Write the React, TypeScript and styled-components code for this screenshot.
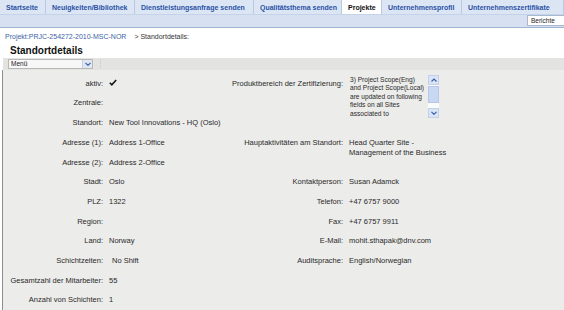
import React from "react";
import styled, { createGlobalStyle } from "styled-components";

const Global = createGlobalStyle`
  html, body { margin: 0; padding: 0; background: #ffffff; }
  body { font-family: "Liberation Sans", Arial, sans-serif; width: 564px; height: 310px; overflow: hidden; }
`;

const Page = styled.div`
  width: 564px;
  height: 310px;
  display: flex;
  flex-direction: column;
  overflow: hidden;
`;

const TabBar = styled.div`
  background: #d6e0f0;
  border-bottom: 1px solid #9fb3d3;
  display: flex;
  flex-direction: column;
`;

const TabRow = styled.div`
  display: flex;
  height: 14px;
  background: #dce5f3;
  border-bottom: 1px solid #c5d3e8;
`;

const Tab = styled.div<{ $active?: boolean; $w: number }>`
  display: flex;
  align-items: center;
  padding: 0 0 0 6px;
  width: ${(p) => p.$w}px;
  flex-shrink: 0;
  box-sizing: border-box;
  border-right: 1px solid #b9c9e2;
  font-weight: bold;
  font-size: 7px;
  white-space: nowrap;
  overflow: hidden;
  color: ${(p) => (p.$active ? "#111" : "#2a52a6")};
  background: ${(p) => (p.$active ? "#ffffff" : "transparent")};
`;

const SubRow = styled.div`
  height: 12px;
  display: flex;
  justify-content: flex-end;
  align-items: flex-start;
`;

const Reports = styled.div`
  width: 37px;
  height: 11px;
  box-sizing: border-box;
  background: #fff;
  border: 1px solid #a8b8d0;
  border-right: none;
  font-size: 6.5px;
  color: #222;
  padding: 1px 0 0 3px;
`;

const Crumb = styled.div`
  font-size: 7px;
  padding: 5px 0 0 5px;
  height: 9px;
  color: #333;
  white-space: nowrap;
`;

const CrumbLink = styled.span`
  color: #3c5fa6;
  margin-right: 8px;
`;

const Title = styled.h1`
  margin: 3px 0 0 10px;
  font-size: 10px;
  line-height: 12px;
  font-weight: bold;
  color: #111;
`;

const Toolbar = styled.div`
  margin: 1px 0 0 3px;
  height: 12px;
  background: #e3e3e1;
  display: flex;
  align-items: center;
  padding-left: 5px;
  gap: 7px;
`;

const MenuSelect = styled.div`
  width: 85px;
  height: 10px;
  box-sizing: border-box;
  background: #f7f7f7;
  border: 1px solid #b8b8b8;
  display: flex;
  align-items: center;
  justify-content: space-between;
  font-size: 6.5px;
  color: #222;
  padding-left: 2px;
`;

const ArrowBox = styled.div`
  width: 9px;
  height: 8px;
  background: #dfe7f5;
  border-left: 1px solid #c4cfe3;
  display: flex;
  align-items: center;
  justify-content: center;
`;

const Sep = styled.div`
  width: 1px;
  height: 9px;
  border-left: 1px dotted #c8c8c8;
`;

const Content = styled.div`
  flex: 1;
  margin-left: 2px;
  border-left: 1px solid #8e8e8e;
  background: #ececea;
  padding-top: 4px;
`;

const Form = styled.div`
  display: grid;
  grid-template-columns: 100px 127px 113px 1fr;
  grid-auto-rows: 19.7px;
  font-size: 7.5px;
  line-height: 10px;
  color: #2a2a2a;
`;

const Label = styled.div<{ $row: number; $col: number }>`
  grid-row: ${(p) => p.$row};
  grid-column: ${(p) => p.$col};
  text-align: right;
  padding-top: 5px;
  white-space: nowrap;
`;

const Value = styled.div<{ $row: number; $col: number; $indent?: number }>`
  grid-row: ${(p) => p.$row};
  grid-column: ${(p) => p.$col};
  padding: 5px 0 0 ${(p) => 6 + (p.$indent || 0)}px;
  white-space: nowrap;
`;

const ScopeBox = styled.div`
  grid-row: 1 / span 3;
  grid-column: 4;
  margin: 1px 0 0 6px;
  width: 90px;
  height: 43px;
  display: flex;
  overflow: hidden;
`;

const ScopeText = styled.div`
  flex: 1;
  min-width: 0;
  overflow: hidden;
  font-size: 6.6px;
  line-height: 8.5px;
  padding: 1px 0 0 1px;
  white-space: nowrap;
`;

const ScrollBar = styled.div`
  width: 11px;
  flex-shrink: 0;
  display: flex;
  flex-direction: column;
  background: #fafbfd;
`;

const ScrollBtn = styled.div`
  height: 8px;
  background: #d9e4f6;
  border: 1px solid #c2d0ea;
  display: flex;
  align-items: center;
  justify-content: center;
`;

const ScrollThumb = styled.div`
  height: 15px;
  margin-top: 1px;
  background: #c9d8f2;
  border: 1px solid #b6c8ea;
`;

const ScrollTrack = styled.div`
  flex: 1;
`;

const Chevron = ({ up }: { up?: boolean }) => (
  <svg width="6" height="4" viewBox="0 0 6 4">
    <path d={up ? "M0.5 3.5 L3 1 L5.5 3.5" : "M0.5 0.8 L3 3.3 L5.5 0.8"} fill="none" stroke="#3b5fa8" strokeWidth="1.2" />
  </svg>
);

const Check = () => (
  <svg width="8" height="7" viewBox="0 0 8 7">
    <path d="M0.8 3.8 L2.8 5.8 L7.2 1" fill="none" stroke="#111" strokeWidth="1.5" />
  </svg>
);

const tabs: [string, number, boolean?][] = [
  ["Startseite", 46],
  ["Neuigkeiten/Bibliothek", 89],
  ["Dienstleistungsanfrage senden", 119],
  ["Qualitätsthema senden", 88],
  ["Projekte", 40, true],
  ["Unternehmensprofil", 80],
  ["Unternehmenszertifikate", 102],
];

const left: [string, React.ReactNode, number?][] = [
  ["aktiv:", <Check />],
  ["Zentrale:", ""],
  ["Standort:", "New Tool Innovations - HQ (Oslo)"],
  ["Adresse (1):", "Address 1-Office"],
  ["Adresse (2):", "Address 2-Office"],
  ["Stadt:", "Oslo"],
  ["PLZ:", "1322"],
  ["Region:", ""],
  ["Land:", "Norway"],
  ["Schichtzeiten:", "No Shift", 3],
  ["Gesamtzahl der Mitarbeiter:", "55"],
  ["Anzahl von Schichten:", "1"],
];

const right: [number, string, React.ReactNode][] = [
  [4, "Hauptaktivitäten am Standort:", <>Head Quarter Site -<br />Management of the Business</>],
  [6, "Kontaktperson:", "Susan Adamck"],
  [7, "Telefon:", "+47 6757 9000"],
  [8, "Fax:", "+47 6757 9911"],
  [9, "E-Mail:", "mohit.sthapak@dnv.com"],
  [10, "Auditsprache:", "English/Norwegian"],
];

export default function App() {
  return (
    <Page>
      <Global />
      <TabBar>
        <TabRow>
          {tabs.map(([t, w, a]) => (
            <Tab key={t} $w={w} $active={a}>{t}</Tab>
          ))}
        </TabRow>
        <SubRow>
          <Reports>Berichte</Reports>
        </SubRow>
      </TabBar>
      <Crumb>
        <CrumbLink>Projekt:PRJC-254272-2010-MSC-NOR</CrumbLink>&gt; Standortdetails:
      </Crumb>
      <Title>Standortdetails</Title>
      <Toolbar>
        <MenuSelect>
          Menü
          <ArrowBox><Chevron /></ArrowBox>
        </MenuSelect>
        <Sep />
      </Toolbar>
      <Content>
        <Form>
          {left.map(([l, v, ind], i) => (
            <React.Fragment key={l}>
              <Label $row={i + 1} $col={1}>{l}</Label>
              <Value $row={i + 1} $col={2} $indent={ind}>{v}</Value>
            </React.Fragment>
          ))}
          <Label $row={1} $col={3}>Produktbereich der Zertifizierung:</Label>
          <ScopeBox>
            <ScopeText>
              3) Project Scope(Eng)<br />
              and Project Scope(Local)<br />
              are updated on following<br />
              fields on all Sites<br />
              associated to
            </ScopeText>
            <ScrollBar>
              <ScrollBtn><Chevron up /></ScrollBtn>
              <ScrollThumb />
              <ScrollTrack />
              <ScrollBtn><Chevron /></ScrollBtn>
            </ScrollBar>
          </ScopeBox>
          {right.map(([r, l, v]) => (
            <React.Fragment key={l}>
              <Label $row={r} $col={3}>{l}</Label>
              <Value $row={r} $col={4}>{v}</Value>
            </React.Fragment>
          ))}
        </Form>
      </Content>
    </Page>
  );
}
